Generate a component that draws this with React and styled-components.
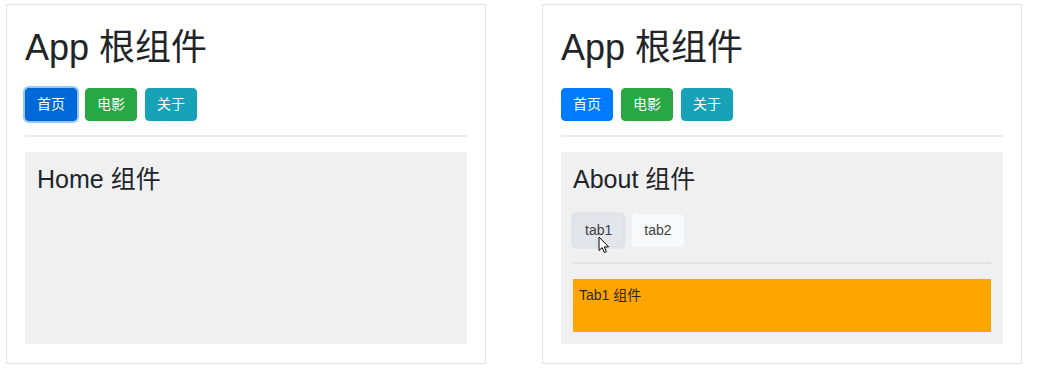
import React from 'react';
import styled, { createGlobalStyle } from 'styled-components';

const GlobalStyle = createGlobalStyle`
  body {
    margin: 0;
    background: #fff;
    font-family: "Liberation Sans", "Noto Sans CJK SC", sans-serif;
    color: #212529;
  }
`;

const variants = {
  primary: { bg: '#007bff', border: '#007bff', color: '#fff' },
  primaryFocus: { bg: '#0069d9', border: '#0062cc', color: '#fff', ring: 'rgba(38, 143, 255, 0.5)' },
  success: { bg: '#28a745', border: '#28a745', color: '#fff' },
  info: { bg: '#17a2b8', border: '#17a2b8', color: '#fff' },
  light: { bg: '#f8f9fa', border: '#f8f9fa', color: '#3d4246' },
  lightFocus: { bg: '#e2e6ea', border: '#dae0e5', color: '#3d4246', ring: 'rgba(216, 217, 219, 0.5)' },
};

const App = () => {
  return (
    <>
      <GlobalStyle />
      <Page>
        <Panel>
          <Title>App 根组件</Title>
          <NavRow>
            <Btn variant="primaryFocus">首页</Btn>
            <Btn variant="success">电影</Btn>
            <Btn variant="info">关于</Btn>
          </NavRow>
          <Rule />
          <View>
            <ViewTitle>Home 组件</ViewTitle>
          </View>
        </Panel>

        <Panel>
          <Title>App 根组件</Title>
          <NavRow>
            <Btn variant="primary">首页</Btn>
            <Btn variant="success">电影</Btn>
            <Btn variant="info">关于</Btn>
          </NavRow>
          <Rule />
          <View>
            <ViewTitle>About 组件</ViewTitle>
            <TabRow>
              <TabWrap>
                <Btn variant="lightFocus">tab1</Btn>
                <Cursor viewBox="0 0 12 18" width="12" height="18">
                  <path
                    d="M1 1 L1 14.5 L4.2 11.6 L6.4 16.6 L8.4 15.7 L6.3 10.9 L10.6 10.9 Z"
                    fill="#fff"
                    stroke="#000"
                    strokeWidth="1"
                    strokeLinejoin="round"
                  />
                </Cursor>
              </TabWrap>
              <Btn variant="light">tab2</Btn>
            </TabRow>
            <InnerRule />
            <TabContent>Tab1 组件</TabContent>
          </View>
        </Panel>
      </Page>
    </>
  );
};

export default App;

const Page = styled.div`
  display: flex;
  gap: 56px;
  padding: 4px 0 0 6px;
`;

const Panel = styled.div`
  box-sizing: border-box;
  width: 480px;
  height: 360px;
  border: 1px solid #e2e2e2;
  padding: 18px;
`;

const Title = styled.h1`
  margin: 3px 0 19px;
  font-size: 36px;
  font-weight: 400;
  line-height: 1.2;
`;

const NavRow = styled.div`
  display: flex;
  gap: 8px;
`;

const Btn = styled.button`
  box-sizing: border-box;
  height: 33px;
  padding: 0 11px;
  font-family: "Liberation Sans", "Noto Sans CJK SC", sans-serif;
  font-size: 14px;
  line-height: 21px;
  border-radius: 4px;
  border: 1px solid ${(p) => variants[p.variant].border};
  background: ${(p) => variants[p.variant].bg};
  color: ${(p) => variants[p.variant].color};
  box-shadow: ${(p) => (variants[p.variant].ring ? `0 0 0 2px ${variants[p.variant].ring}` : 'none')};
  cursor: pointer;
`;

const Rule = styled.hr`
  margin: 14px 0 15px;
  border: 0;
  border-top: 2px solid #ececec;
`;

const View = styled.div`
  box-sizing: border-box;
  height: 192px;
  background: #f0f0f0;
  padding: 12px;
`;

const ViewTitle = styled.h3`
  margin: 0;
  font-size: 25px;
  font-weight: 400;
  line-height: 30px;
`;

const TabRow = styled.div`
  display: flex;
  gap: 8px;
  margin-top: 20px;
`;

const TabWrap = styled.div`
  position: relative;
`;

const Cursor = styled.svg`
  position: absolute;
  left: 25px;
  top: 22px;
  pointer-events: none;
`;

const InnerRule = styled.hr`
  margin: 15px 0 15px;
  border: 0;
  border-top: 2px solid #e3e3e3;
`;

const TabContent = styled.div`
  box-sizing: border-box;
  height: 53px;
  padding: 6px;
  background: #ffa500;
  font-size: 14px;
  line-height: 21px;
  color: #2a2a2a;
`;
